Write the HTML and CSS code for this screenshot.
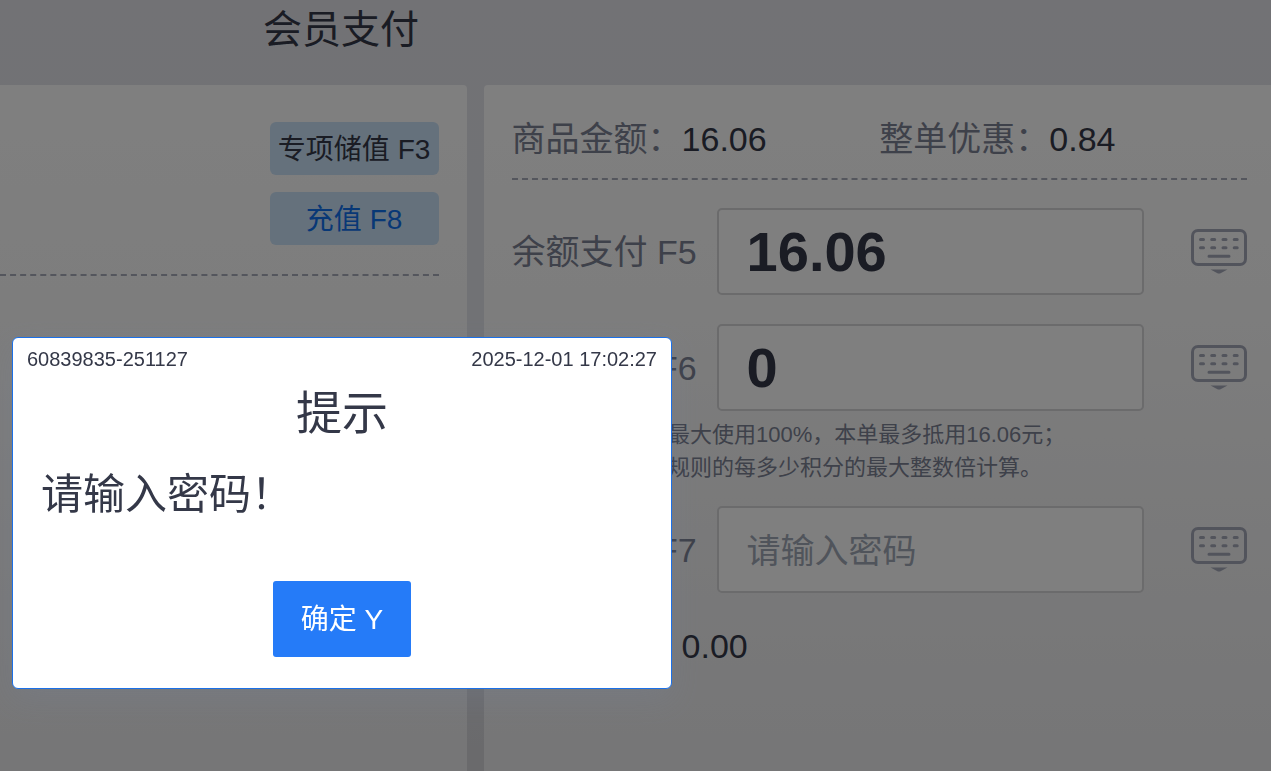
FILE: index.html
```
<!DOCTYPE html>
<html lang="zh-CN">
<head>
  <meta charset="UTF-8" />
  <meta name="viewport" content="width=device-width, initial-scale=1.0" />
  <title>会员支付</title>
  <link rel="stylesheet" href="styles.css">
</head>
<body>
  <svg class="sprite" aria-hidden="true">
    <symbol id="keyboard" viewBox="0 0 56 45">
      <rect x="1.5" y="1.5" width="53" height="34" rx="5.5" fill="none" stroke="currentColor" stroke-width="3" />
      <path d="M9.5 10.5h3M20.7 10.5h3M32 10.5h3M43.2 10.5h3M9.5 18.8h3M20.7 18.8h3M32 18.8h3M43.2 18.8h3M18 27.200h20" fill="none" stroke="currentColor" stroke-width="3" stroke-linecap="round" />
      <path d="M19.500 40.500h17l-6.500 3.500q-2 1-4 0z" fill="currentColor" />
    </symbol>
  </svg>

  <header class="page-header">
    <h1>会员支付</h1>
  </header>

  <main class="content">
    <section class="panel member">
      <div class="member-actions">
        <button type="button" class="action">专项储值 F3</button>
        <button type="button" class="action primary">充值 F8</button>
      </div>
    </section>

    <section class="panel payment">
      <dl class="amounts">
        <div><dt>商品金额：</dt><dd>16.06</dd></div>
        <div><dt>整单优惠：</dt><dd>0.84</dd></div>
      </dl>

      <div class="field">
        <label for="balance">余额支付 F5</label>
        <input type="text" id="balance" value="16.06">
        <button type="button" class="key-btn" aria-label="键盘"><svg><use href="#keyboard" /></svg></button>
      </div>

      <div class="field">
        <label for="points">积分支付 F6</label>
        <input type="text" id="points" value="0">
        <button type="button" class="key-btn" aria-label="键盘"><svg><use href="#keyboard" /></svg></button>
      </div>

      <div class="hint">
        <p>1.积分单笔支付最大使用100%，本单最多抵用16.06元；</p>
        <p>2.抵用积分按照规则的每多少积分的最大整数倍计算。</p>
      </div>

      <div class="field">
        <label for="password">支付密码 F7</label>
        <input type="password" id="password" placeholder="请输入密码">
        <button type="button" class="key-btn" aria-label="键盘"><svg><use href="#keyboard" /></svg></button>
      </div>

      <dl class="total">
        <div><dt>还需支付：</dt><dd>0.00</dd></div>
      </dl>
    </section>
  </main>

  <div class="mask"></div>

  <div class="modal" role="alertdialog" aria-labelledby="modalTitle">
    <div class="modal-info">
      <span>60839835-251127</span>
      <time datetime="2025-12-01T17:02:27">2025-12-01 17:02:27</time>
    </div>
    <h2 id="modalTitle">提示</h2>
    <p class="modal-text">请输入密码！</p>
    <button type="button" class="confirm">确定 Y</button>
  </div>
</body>
</html>
```
FILE: styles.css
```
* {
  box-sizing: border-box;
  margin: 0;
  padding: 0;
}
body {
  display: flex;
  flex-direction: column;
  min-height: 100vh;
  font-family: "Liberation Sans", "Noto Sans CJK SC", sans-serif;
  font-size: 34px;
  color: #343848;
  background: linear-gradient(#e4e5eb, #e2e4ea 50%, #d4d4d8);
}
button, input {
  font-family: inherit;
}
.sprite {
  position: absolute;
  width: 0;
  height: 0;
}
.page-header {
  height: 85px;
  padding-left: 263px;
}
h1 {
  font-size: 39px;
  font-weight: normal;
  line-height: 60px;
}
.content {
  flex: 1;
  display: grid;
  grid-template-columns: 16fr 27fr;
  gap: 17px;
}
.panel {
  background: linear-gradient(#fff, #fbfbfb 30%, #f4f4f5 60%, #ececee);
}

/* left: member card */
.member {
  padding: 37px 28px 0 0;
  border-radius: 0 4px 0 0;
}
.member-actions {
  display: flex;
  flex-direction: column;
  align-items: flex-end;
  gap: 17px;
  padding-bottom: 29px;
  border-bottom: 2px dashed #a8acba;
}
.action {
  width: 169px;
  height: 53px;
  padding-bottom: 4px;
  border: none;
  border-radius: 6px;
  background: #cae2f8;
  color: #343848;
  font-size: 28px;
}
.action.primary {
  color: #1070ec;
}

/* right: payment form */
.payment {
  padding: 28px 24px 0 28px;
  border-radius: 4px 0 0 0;
}
.amounts {
  display: grid;
  grid-template-columns: 1fr 1fr;
  height: 67px;
  margin-bottom: 28px;
  border-bottom: 2px dashed #a8acba;
}
.amounts div, .total div {
  display: flex;
  line-height: 52px;
}
dt, .field label {
  color: #7c8294;
}
.field {
  display: grid;
  grid-template-columns: 205px 1fr 103px;
  align-items: center;
  margin-bottom: 29px;
}
.field label {
  padding-bottom: 4px;
}
.field input {
  width: 100%;
  height: 87px;
  padding: 0 28px;
  border: 2px solid #d6d6d8;
  border-radius: 5px;
  background: #fff;
  color: #343848;
  font-size: 56px;
  font-weight: bold;
}
.field input[type="password"] {
  padding-top: 4px;
  font-size: 34px;
  font-weight: normal;
}
.field input::placeholder {
  color: #a0a8b6;
}
.key-btn {
  justify-self: end;
  border: none;
  background: none;
  color: #a4a8b8;
}
.key-btn svg {
  display: block;
  width: 56px;
  height: 45px;
}
.hint {
  margin: -22px 0 22px 6px;
  font-size: 22px;
  line-height: 33px;
  color: #7c8294;
}
.total {
  margin-top: -2px;
}

.mask {
  position: fixed;
  inset: 0;
  background: rgba(0, 0, 0, 0.5);
}
.modal {
  position: fixed;
  top: 337px;
  left: 12px;
  width: 660px;
  max-width: calc(100% - 24px);
  padding: 8px 14px 31px;
  border: 1px solid #1b70e8;
  border-radius: 6px;
  background: #fff;
  box-shadow: 0 10px 30px rgba(120, 140, 180, 0.15);
}
.modal-info {
  display: flex;
  justify-content: space-between;
  font-size: 20px;
  line-height: 26px;
}
h2 {
  font-size: 46px;
  font-weight: normal;
  line-height: 82px;
  text-align: center;
}
.modal-text {
  padding-left: 14px;
  font-size: 42px;
  line-height: 82px;
}
.confirm {
  display: block;
  height: 76px;
  margin: 45px auto 0;
  padding: 0 28px 4px;
  border: none;
  border-radius: 3px;
  background: #257bf8;
  color: #fff;
  font-size: 28px;
}
```
